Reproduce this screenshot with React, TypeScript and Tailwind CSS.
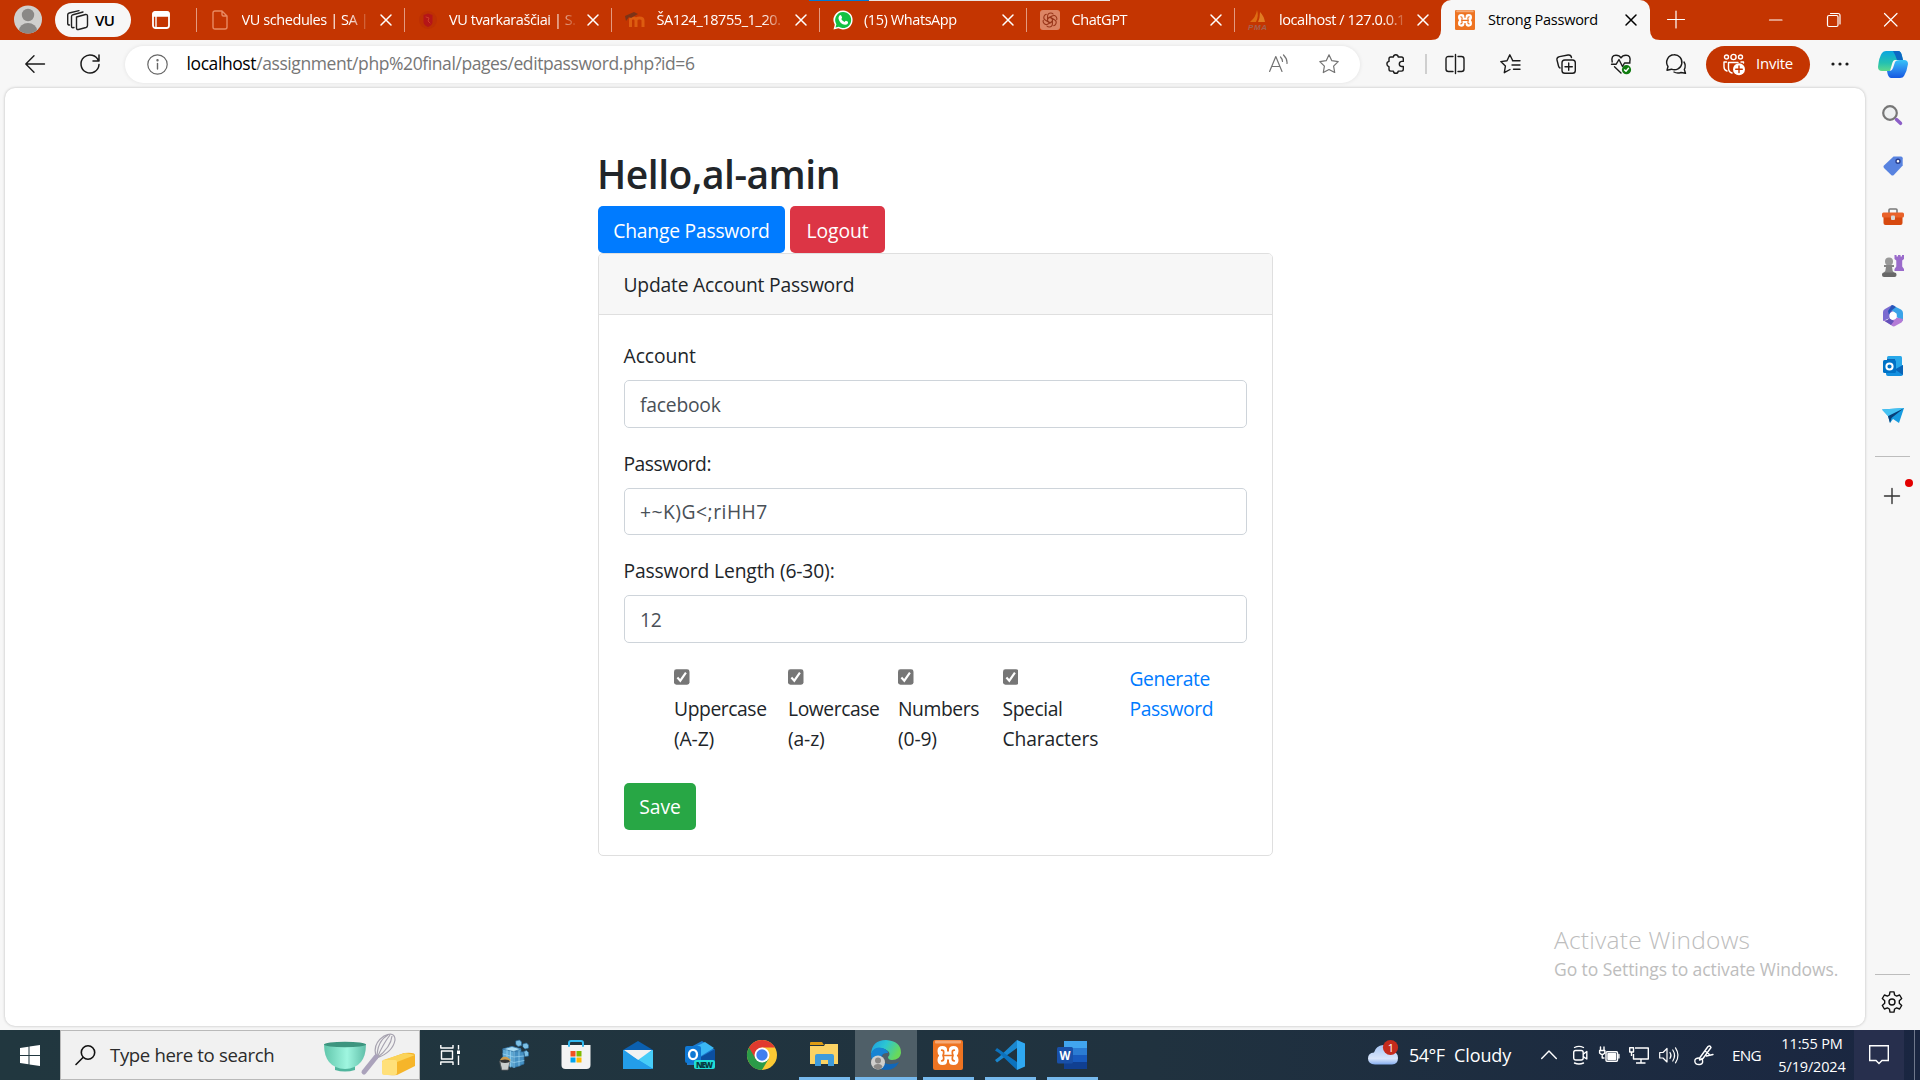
import React from "react";

type IconProps = { w: number; h: number; className?: string; children: React.ReactNode };

function Icon({ w, h, className = "", children }: IconProps) {
  return (
    <svg
      width={w}
      height={h}
      viewBox={`0 0 ${w} ${h}`}
      fill="none"
      stroke="currentColor"
      strokeWidth="1.4"
      strokeLinecap="round"
      strokeLinejoin="round"
      className={`block shrink-0 overflow-visible ${className}`}
    >
      {children}
    </svg>
  );
}

const CloseX = ({ className = "" }: { className?: string }) => (
  <Icon w={12} h={12} className={className}>
    <path d="M1 1 L11 11 M11 1 L1 11" strokeWidth="1.5" />
  </Icon>
);

const XamppIcon = ({ w, h }: { w: number; h: number }) => (
  <svg width={w} height={h} viewBox="0 0 30 30" className="block shrink-0">
    <rect width="30" height="30" rx="2" fill="#ee7422" />
    <rect x="2" y="0.5" width="26" height="3" rx="1" fill="#f6b78b" opacity=".8" />
    <path
      d="M9.500 6 Q14 6 14 9.500 V11.500 H16 V9.500 Q16 6 20.500 6 Q25.500 6 25.500 11 Q25.500 14 23.800 15.500 Q25.500 17 25.500 20 Q25.500 25 20.500 25 Q16 25 16 21.500 V19.500 H14 V21.500 Q14 25 9.500 25 Q4.500 25 4.500 20 Q4.500 17 6.200 15.500 Q4.500 14 4.500 11 Q4.500 6 9.500 6z"
      fill="#fff"
    />
    <path
      d="M8.700 10.200 Q10.700 10.200 10.700 12.200 Q10.700 15.500 9.200 15.500 Q10.700 15.500 10.700 18.800 Q10.700 20.800 8.700 20.800 M21.300 10.200 Q19.300 10.200 19.300 12.200 Q19.300 15.500 20.800 15.500 Q19.300 15.500 19.300 18.800 Q19.300 20.800 21.300 20.800 M10.500 15.500 H19.500"
      fill="none"
      stroke="#ee7422"
      strokeWidth="1.700"
      strokeLinecap="round"
    />
  </svg>
);

const DocIcon = () => (
  <Icon w={16} h={20} className="text-[#e88a62]">
    <path d="M1 3 q0 -2 2 -2 h7 l5 5 v11 q0 2 -2 2 h-10 q-2 0 -2 -2z M10 1 v3.5 q0 1.5 1.5 1.5 h3.5" />
  </Icon>
);
const CrestIcon = () => (
  <Icon w={18} h={20}>
    <circle cx="9" cy="10" r="9" fill="#bd3004" stroke="none" />
    <path d="M4.500 5 l4.500 -1.500 l4.500 1.500 v7 q0 3 -4.500 5 q-4.500 -2 -4.500 -5z" fill="#b51518" stroke="none" />
    <path d="M7 7 l3 1 l-1 3 l2 2" stroke="#cd3c2c" strokeWidth="1" />
  </Icon>
);
const MoodleIcon = () => (
  <Icon w={20} h={16}>
    <path d="M5.500 15 V8 q0 -2 2.500 -2 q3 0 3 2.500 V15 M11 8.500 q0 -2.500 3.500 -2.500 q3.500 0 3.500 2.500 V15" stroke="#dd5c10" strokeWidth="3" strokeLinecap="butt" />
    <path d="M0 4 L9 0 L13 2 L6 6 L4 5 L1 9z" fill="#7c3317" stroke="none" />
  </Icon>
);
const WhatsAppIcon = () => (
  <Icon w={20} h={20}>
    <path d="M10 0.500 A9.500 9.500 0 1 1 5.500 18.300 L0.500 19.500 L1.800 14.800 A9.500 9.500 0 0 1 10 0.500z" fill="#fff" stroke="none" />
    <path d="M10 2 A8 8 0 1 1 5.800 16.700 L2.500 17.500 L3.400 14.300 A8 8 0 0 1 10 2z" fill="#12c143" stroke="none" />
    <path d="M6.500 5.500 q1 -1 1.700 0 l.9 2 q.1.6 -.9 1.500 q1.200 2.200 3.400 3 q1 -1.300 1.400 -1.200 l2 1 q.4 3 -3 2.900 q-5 -.5 -6.500 -6 q-.2 -2 1 -3.200z" fill="#fff" stroke="none" />
  </Icon>
);
const ChatGptIcon = () => (
  <Icon w={20} h={20}>
    <rect width="20" height="20" rx="3" fill="#dc8565" stroke="none" />
    <g stroke="#98361a" strokeWidth="1.100">
      {[0, 60, 120, 180, 240, 300].map((a) => (
        <path key={a} transform={`rotate(${a} 10 10)`} d="M7.600 11.400 V6.300 q0 -3.300 3.200 -3.300 q1.400 0 2.300 1 M7.600 8.600 L10.200 7" />
      ))}
    </g>
  </Icon>
);
const PmaIcon = () => (
  <Icon w={20} h={20}>
    <path d="M9 0 Q11 6 8 12 H2 Q8 7 9 0z" fill="#dd6c13" stroke="none" />
    <path d="M12 2 Q12 8 10 12 H17 Q16 6 12 2z" fill="#e07c23" stroke="none" />
    <text x="0" y="19.500" textLength="19" fontSize="8" fontWeight="700" fontStyle="italic" fontFamily="Liberation Sans" fill="#a5604f" stroke="none">PMA</text>
  </Icon>
);

function Tab({ title, icon }: { title: string; icon: React.ReactNode }) {
  return (
    <div className="flex h-10 w-[207.5px] shrink-0 items-center">
      <div className="h-6 w-px bg-[#e39a80]" />
      <div className="ml-[13px] flex w-5 justify-center">{icon}</div>
      <div className="ml-[11.5px] w-[129px] overflow-hidden whitespace-nowrap text-[14.5px] tracking-[-0.42px] text-white [mask-image:linear-gradient(to_right,black_82%,transparent_100%)]">
        {title}
      </div>
      <CloseX className="ml-[9px] text-white" />
    </div>
  );
}

function TabBar() {
  return (
    <header className="relative flex h-10 shrink-0 items-center bg-[#c43501]">
      <div className="absolute left-[809px] top-0 flex h-px w-[301px]">
        <div className="w-[60px] bg-[#0078d4]" />
        <div className="flex-1 bg-[#e9e4e2]" />
      </div>
      <svg width="28" height="30" viewBox="0 0 28 30" className="ml-[14px] shrink-0">
        <defs>
          <clipPath id="avatar"><ellipse cx="14" cy="14.500" rx="14" ry="14" /></clipPath>
        </defs>
        <ellipse cx="14" cy="14.500" rx="14" ry="14" fill="#d0cfcd" />
        <g clipPath="url(#avatar)" fill="#8a8886">
          <circle cx="14" cy="10" r="6.200" />
          <ellipse cx="14" cy="25.500" rx="9" ry="7.500" />
        </g>
      </svg>
      <div className="ml-[13px] flex h-[34px] w-[76px] items-center rounded-full bg-[#f7f7f7] pl-3">
        <Icon w={21} h={20} className="text-[#222]">
          <path d="M9.500 7 l9 -2.500 q2 -.3 2 1.500 v9.500 q0 1.500 -1.500 2 l-7.500 2 q-2 .4 -2 -1.500z" />
          <path d="M7 17.500 l-1.200 .2 q-1.300 0 -1.300 -1.500 V6.500 q0 -1.300 1.500 -1.800 L16 2" />
          <path d="M2.500 15 q-1.800 0 -1.800 -1.500 V4.800 q0 -1.300 1.500 -1.800 L12 .6" />
        </Icon>
        <span className="ml-[7px] text-[15px] font-semibold tracking-[-0.5px] text-black">VU</span>
      </div>
      <Icon w={18} h={18} className="ml-[21px] text-white">
        <rect x="1" y="1" width="16" height="16" rx="2.500" strokeWidth="1.800" />
        <path d="M1 5 V3 q0 -2 2 -2 h12 q2 0 2 2 v2z" fill="currentColor" />
        <path d="M4 5 v12" />
      </Icon>
      <div className="ml-[26px] flex">
        <Tab title="VU schedules | SA |" icon={<DocIcon />} />
        <Tab title="VU tvarkaraščiai | S." icon={<CrestIcon />} />
        <Tab title="ŠA124_18755_1_20." icon={<MoodleIcon />} />
        <Tab title="(15) WhatsApp" icon={<WhatsAppIcon />} />
        <Tab title="ChatGPT" icon={<ChatGptIcon />} />
        <Tab title="localhost / 127.0.0.1" icon={<PmaIcon />} />
      </div>
      <div className="relative flex h-10 w-[209px] shrink-0 items-center rounded-t-[10px] bg-[#f7f7f7]">
        <svg width="10" height="10" className="absolute -left-[10px] bottom-0"><path d="M10 0 V10 H0 Q10 10 10 0z" fill="#f7f7f7" /></svg>
        <svg width="10" height="10" className="absolute -right-[10px] bottom-0"><path d="M0 0 V10 H10 Q0 10 0 0z" fill="#f7f7f7" /></svg>
        <div className="ml-[14px]"><XamppIcon w={20} h={20} /></div>
        <span className="ml-[13px] w-[137px] whitespace-nowrap text-[14.5px] tracking-[-0.25px] text-black">Strong Password</span>
        <CloseX className="text-black" />
      </div>
      <Icon w={18} h={18} className="ml-[17px] text-white"><path d="M9 0 V17 M0.500 8.500 H17.500" strokeWidth="1.200" /></Icon>
      <Icon w={14} h={14} className="ml-[84px] text-white"><path d="M.5 7 H13" strokeWidth="1.200" /></Icon>
      <Icon w={14} h={14} className="ml-[44px] text-white">
        <rect x=".5" y="2.500" width="10.500" height="11" rx="1.500" strokeWidth="1.200" />
        <path d="M3.500 .5 H11 q2 0 2 2 V11" strokeWidth="1.200" />
      </Icon>
      <Icon w={14} h={14} className="ml-[43px] text-white"><path d="M.5 .5 L13 13 M13 .5 L.5 13" strokeWidth="1.200" /></Icon>
    </header>
  );
}

function Slot({ children }: { children: React.ReactNode }) {
  return <div className="flex w-[55.5px] shrink-0 justify-center">{children}</div>;
}

function Toolbar() {
  return (
    <div className="flex h-12 shrink-0 items-center text-[#1b1b1b]">
      <Icon w={20} h={18} className="ml-[25px]"><path d="M19.500 9 H1 M9 .8 L.8 9 L9 17.200" /></Icon>
      <Icon w={20} h={20} className="ml-[35px]">
        <path d="M18.500 7 A9 9 0 1 0 19 10.500 M19 1 V7 H13" strokeWidth="1.500" />
      </Icon>
      <div className="ml-[25px] flex h-[37px] w-[1235px] shrink-0 items-center rounded-full bg-white shadow-[0_0_4px_rgba(0,0,0,0.09)]">
        <Icon w={21} h={21} className="ml-[22px] text-[#666]">
          <circle cx="10.500" cy="10.500" r="9.700" strokeWidth="1.200" />
          <path d="M10.500 9.500 V15" />
          <circle cx="10.500" cy="6.300" r=".5" fill="currentColor" />
        </Icon>
        <span className="ml-[18.5px] -translate-y-px whitespace-nowrap text-[17.5px] tracking-[-0.41px] text-[#767676]">
          <span className="text-black">localhost</span>/assignment/php%20final/pages/editpassword.php?id=6
        </span>
        <div className="ml-auto mr-[21px] flex items-center text-[#737373]">
          <Icon w={20} h={19} className="-translate-y-px">
            <path d="M.6 17.500 L6.800 2.500 L13 17.500 M2.800 12.500 H10.800 M11.500 3 q2 2 2 4.500 M14.500 1 q4 4 3.500 8.500" strokeWidth="1.200" />
          </Icon>
          <Icon w={20} h={20} className="ml-[30px]">
            <path d="M10 .8 L12.800 6.700 L19.200 7.600 L14.600 12.100 L15.700 18.500 L10 15.500 L4.300 18.500 L5.400 12.100 L.8 7.600 L7.200 6.700z" strokeWidth="1.200" />
          </Icon>
        </div>
      </div>
      <div className="ml-4 flex w-10 shrink-0 justify-center">
        <Icon w={20} h={20}>
          <path d="M4.800 3 H7.400 Q7.600 .8 9.800 .8 Q12 .8 12.200 3 H15.500 q1.800 0 1.800 1.800 V7.400 H15.500 Q13.300 7.800 13.300 10 Q13.300 12.200 15.500 12.500 H17.300 V15.300 q0 1.800 -1.800 1.800 H12.200 Q12 19.300 9.800 19.300 Q7.600 19.300 7.400 17.100 H4.800 q-1.800 0 -1.800 -1.800 V12.800 Q.9 12.300 .9 10.100 Q.9 7.800 3 7.400 V4.800 q0 -1.800 1.800 -1.800z" />
        </Icon>
      </div>
      <div className="ml-[9px] h-5 w-[2px] bg-[#cfcfcf]" />
      <Slot>
        <Icon w={20} h={20}>
          <path d="M8 2.500 H3.500 q-2.500 0 -2.500 2.500 V15 q0 2.500 2.500 2.500 H8 M10.500 .5 V19.500 M13 2.500 H16.500 q2.500 0 2.500 2.500 V15 q0 2.500 -2.500 2.500 H13" />
        </Icon>
      </Slot>
      <Slot>
        <Icon w={21} h={20}>
          <path d="M12.800 6.800 L9.800 .8 L7 6.800 L.8 7.600 L5.400 12.100 L4.300 18.700 L10 15.500 M12.500 6.800 H20 M12 11 H20 M13.500 15.300 H20" />
        </Icon>
      </Slot>
      <Slot>
        <Icon w={20} h={20}>
          <rect x="6" y="6" width="13.300" height="13.300" rx="2.800" />
          <path d="M12.700 9 V16.300 M9 12.700 H16.300 M15.500 3.500 q-.6 -3 -3.500 -2.500 L3.500 2.600 Q.4 3.300 1 6 L2.500 12 q.4 1.600 1.500 2" />
        </Icon>
      </Slot>
      <Slot>
        <Icon w={20} h={20}>
          <path d="M1.200 8 Q-.2 1.300 5 1.200 Q8.500 1.200 10 4 Q11.500 1.200 15 1.200 Q20.200 1.300 18.800 8 M3.500 12.800 L10 19 M.5 10.200 H5.200 L8 5.500 L11.500 12.500 L13.500 9 H19" />
          <circle cx="15.500" cy="15.700" r="4.600" fill="#107c10" stroke="none" />
          <path d="M13.500 15.900 L15 17.200 L17.500 14.300" stroke="#fff" />
        </Icon>
      </Slot>
      <Slot>
        <Icon w={20} h={20} className="-translate-x-px">
          <path d="M8 .8 A7.500 7.500 0 1 1 5.500 15.200 L1 16.200 L2 12.500 A7.500 7.500 0 0 1 8 .8z" />
          <path d="M8 18 Q11 19.800 15 18.500 L19.500 19.300 L18.300 15.500 Q20.300 11.500 18 8" />
        </Icon>
      </Slot>
      <div className="ml-[1.5px] flex h-[37px] w-[104px] shrink-0 items-center rounded-full bg-[#c43501] pl-[17px] text-white">
        <Icon w={22} h={21}>
          <circle cx="3.500" cy="3" r="2" />
          <circle cx="10.500" cy="3" r="2.600" />
          <circle cx="17.500" cy="3" r="2" />
          <path d="M3.500 8 H1 V13 q0 3 3 4 M5.500 8.500 V14 q0 4 3.500 5 M5.500 8.500 H15 M18 8 H20.500 V9" />
          <circle cx="16" cy="15.300" r="6" fill="#fff" stroke="none" />
          <path d="M16 12 V18.600 M12.700 15.300 H19.300" stroke="#c43501" />
        </Icon>
        <span className="ml-[11px] -translate-y-px text-[15px] tracking-[-0.25px]">Invite</span>
      </div>
      <div className="flex w-[60px] shrink-0 justify-center">
        <Icon w={18} h={4}>
          <g fill="currentColor" stroke="none"><circle cx="2" cy="2" r="1.600" /><circle cx="9" cy="2" r="1.600" /><circle cx="16" cy="2" r="1.600" /></g>
        </Icon>
      </div>
      <div className="flex w-[46px] shrink-0 justify-center">
        <svg width="30" height="27" viewBox="0 0 30 27" className="block shrink-0">
          <defs>
            <linearGradient id="cpA" x1="0" y1="0" x2="0" y2="1"><stop offset="0" stopColor="#0aa5e0" /><stop offset=".6" stopColor="#25c1b0" /><stop offset="1" stopColor="#5fd98c" /></linearGradient>
            <linearGradient id="cpB" x1="0" y1="0" x2="0" y2="1"><stop offset="0" stopColor="#36c4f7" /><stop offset=".5" stopColor="#2b8bf0" /><stop offset="1" stopColor="#1558e0" /></linearGradient>
          </defs>
          <path d="M8 0 H20 Q23 0 24 5 L25 9 H17 Q15 9 14 13 L12 20 H4 Q0 20 0 16 Q1 6 4 2 Q5.500 0 8 0z" fill="url(#cpA)" />
          <path d="M15 0 H20 Q23 0 24 5 L25 9 H19 Q17 3 15 0z" fill="#0d68c4" />
          <path d="M22 9 H26 Q30 9 30 13 Q29 20 26 25 Q25 27 22 27 H13 Q10 27 9 20 H12 Q14 20 15 17 L17 11 Q18 9 22 9z" fill="url(#cpB)" />
        </svg>
      </div>
    </div>
  );
}

function Field({ label, value, labelClass = "", valueClass = "" }: { label: string; value: string; labelClass?: string; valueClass?: string }) {
  return (
    <div className="mb-5">
      <label className="mb-[10px] block leading-[30px]"><span className={`relative -left-[0.5px] top-px ${labelClass}`}>{label}</span></label>
      <div className="flex h-[47.5px] items-center rounded-[5px] border border-[#ced4da] bg-white px-[15px] text-[#495057]">
        <span className={`relative top-px ${valueClass}`}>{value}</span>
      </div>
    </div>
  );
}

function Option({ first, second, className }: { first: string; second: string; className: string }) {
  return (
    <div className={`shrink-0 whitespace-nowrap ${className}`}>
      <div className="flex h-[31px] items-start pt-[6px]">
        <svg width="15.500" height="16" viewBox="0 0 16 16">
          <rect width="16" height="16" rx="2.500" fill="#767676" />
          <path d="M3.500 8.500 L6.500 11.800 L12.300 3.600" fill="none" stroke="#fff" strokeWidth="2.200" />
        </svg>
      </div>
      <div>{first}</div>
      <div className="tracking-[-0.15px]">{second}</div>
    </div>
  );
}

function PasswordPage() {
  return (
    <main className="relative ml-[5px] h-[938px] w-[1860px] shrink-0 rounded-[10px] bg-white shadow-[0_0_3px_rgba(0,0,0,0.25)]">
      <div className="ml-[593px] w-[675px] pt-[62px] text-[19.3px] leading-[30px] tracking-[-0.22px] text-[#212529]">
        <h1 className="mb-[8px] whitespace-nowrap text-[39px] font-semibold leading-[48px] tracking-[-0.5px]">
          <span className="relative -left-px">Hello,al-amin</span>
        </h1>
        <div className="flex h-[47px] gap-[5px] text-white">
          <button className="w-[187px] rounded-[5px] bg-[#007bff] pt-[2px]">Change Password</button>
          <button className="w-[95px] rounded-[5px] bg-[#dc3545] pt-[2px] tracking-[-0.05px]">Logout</button>
        </div>
        <section className="h-[603px] overflow-hidden rounded-[5px] border border-[#dfdfdf]">
          <div className="flex h-[61px] items-center border-b border-[#dfdfdf] bg-[#f7f7f7] px-[24.500px] pt-px">Update Account Password</div>
          <div className="px-[25px] pt-[25px]">
            <Field label="Account" value="facebook" labelClass="tracking-[-0.05px]" />
            <Field label="Password:" value="+~K)G<;riHH7" labelClass="tracking-[-0.5px]" valueClass="tracking-[0.5px]" />
            <Field label="Password Length (6-30):" value="12" labelClass="tracking-[-0.15px]" />
            <div className="ml-[50px] flex h-[90px] tracking-[-0.42px]">
              <Option first="Uppercase" second="(A-Z)" className="w-[114px]" />
              <Option first="Lowercase" second="(a-z)" className="w-[110px]" />
              <Option first="Numbers" second="(0-9)" className="w-[104.500px]" />
              <Option first="Special" second="Characters" className="w-[127px]" />
              <a className="pt-px text-[#007bff]">Generate<br />Password</a>
            </div>
            <button className="mt-[30px] h-[47.500px] w-[72px] rounded-[5px] bg-[#28a745] pt-px tracking-normal text-white">Save</button>
          </div>
        </section>
      </div>
      <div className="absolute left-[1549px] top-[836px] whitespace-nowrap text-[#bdbdbd]">
        <div className="text-[24.500px] font-light leading-[32px] tracking-[0.25px]">Activate Windows</div>
        <div className="text-[17.500px] leading-[26px] tracking-[-0.07px]">Go to Settings to activate Windows.</div>
      </div>
    </main>
  );
}

function Sidebar() {
  return (
    <aside className="flex h-[942px] flex-1 flex-col items-center pr-px">
      <div className="flex h-[50px] translate-y-[2px] items-center">
        <Icon w={20} h={20}>
          <circle cx="8" cy="8" r="6.800" stroke="#767676" strokeWidth="2.200" fill="#eef0f1" />
          <path d="M14.500 14.500 L18.500 18.300" stroke="#8c5fc7" strokeWidth="3.500" />
        </Icon>
      </div>
      <div className="flex h-[50px] translate-x-px translate-y-[3px] items-center">
        <Icon w={20} h={20}>
          <path d="M10.500 .5 H18 q1.700 0 1.700 1.700 V9.500 L10.800 19 q-1.300 1.200 -2.600 0 L1 12 q-1.200 -1.300 0 -2.600z" fill="#5883e0" stroke="none" />
          <circle cx="15" cy="5.200" r="2" stroke="#2a3f8d" fill="#fff" />
        </Icon>
      </div>
      <div className="flex h-[50px] translate-x-px translate-y-[4px] items-center">
        <Icon w={22} h={18}>
          <path d="M7 5 V2 q0 -1 1 -1 h6 q1 0 1 1 V5" stroke="#7a7a7a" strokeWidth="1.600" />
          <path d="M1.500 7 H20.500 V15 q0 2 -2 2 H3.500 q-2 0 -2 -2z" fill="#d7490f" stroke="none" />
          <rect x="0" y="4.500" width="22" height="5" rx="1.500" fill="#e9622a" stroke="none" />
          <rect x="9" y="7.500" width="4" height="4.500" rx="1" fill="#d8d8d8" stroke="none" />
        </Icon>
      </div>
      <div className="flex h-[50px] translate-x-px translate-y-[3px] items-center">
        <Icon w={22} h={22}>
          <path d="M12.500 0 h2 v1.500 h1.500 V0 h2.500 v1.500 H20 V0 h2 v4 l-1.800 1.500 v6 l1.800 2.500 v2 h-9.500 v-2 l1.800 -2.500 v-6 L12.500 4z" fill="#9a6bcb" stroke="none" />
          <circle cx="7" cy="6.500" r="4" fill="#999" stroke="none" />
          <path d="M2 10 h10 v2 h-2 q0 4 2.500 6 h-11 q2.500 -2 2.500 -6 h-2z" fill="#858585" stroke="none" />
          <rect x="0" y="17.500" width="14.500" height="4.500" rx="2" fill="#686868" stroke="none" />
        </Icon>
      </div>
      <div className="flex h-[50px] translate-x-px translate-y-[3px] items-center">
        <Icon w={20} h={22}>
          <path d="M9 0 L2 4 Q0 5 0 7 V16 L7 13 V8 L12 5 V1z" fill="#7a6bd0" stroke="none" />
          <path d="M9 0 L18 4.500 Q20 5.500 20 8 V16 L13.500 12 V8.500 L8 5z" fill="#3aa3e8" stroke="none" />
          <path d="M0 15 L8 20 Q10 22.500 13 20.500 L18.500 17.500 Q20 16.500 20 14 L13.500 12.500 L8 16z" fill="#b47bd6" stroke="none" />
          <path d="M9 0 L13 2 L8 6 L6 10 L5 6z" fill="#2755b8" stroke="none" />
          <path d="M0 15 Q3 17 6.500 13 L11 16 L8 20z" fill="#6452ba" stroke="none" />
          <circle cx="10" cy="11" r="3.700" fill="#fff" stroke="none" />
        </Icon>
      </div>
      <div className="flex h-[50px] translate-x-px translate-y-[3px] items-center">
        <Icon w={20} h={20}>
          <rect x="4" y="0" width="15" height="13" rx="1.500" fill="#28a8ea" stroke="none" />
          <path d="M4 3 h8 v9 h-8z" fill="#0f65b4" stroke="none" />
          <path d="M3 9 L11 14 L20 9 V18 q0 2 -2 2 H5 q-2 0 -2 -2z" fill="#1490df" stroke="none" />
          <path d="M20 9 V19 L12 13.500z" fill="#0a64b7" stroke="none" />
          <rect x="0" y="4" width="13" height="13" rx="1.500" fill="#0072c6" stroke="none" />
          <circle cx="6.500" cy="10.500" r="3.100" stroke="#fff" strokeWidth="2" />
        </Icon>
      </div>
      <div className="flex h-[50px] translate-x-px translate-y-[3px] items-center">
        <Icon w={22} h={16}>
          <path d="M0 1.500 L22 0 L17 15 L11 11 L8 15 L6 8z" fill="#169be0" stroke="none" />
          <path d="M6 8 L22 0 L9.500 10 L8 15z" fill="#083f78" stroke="none" />
          <path d="M0 1.500 L22 0 L6 8z" fill="#45c2f2" stroke="none" />
        </Icon>
      </div>
      <div className="mt-[18px] h-px w-[35px] bg-[#bdbdbd]" />
      <div className="relative mt-[31px]">
        <Icon w={16} h={16} className="text-[#333]"><path d="M8 .5 V15.500 M.5 8 H15.500" /></Icon>
        <span className="absolute -right-[13px] -top-[9px] h-2 w-2 rounded-full bg-[#e30000]" />
      </div>
      <div className="mt-auto h-px w-[35px] bg-[#bdbdbd]" />
      <Icon w={22} h={22} className="mb-[17px] mt-[16px] text-[#111]">
        <path
          d="M9 .9 H13 L13.600 4 L15.600 5.100 L18.600 4 L20.700 7.500 L18.300 9.700 V12.300 L20.700 14.500 L18.600 18 L15.600 16.900 L13.600 18 L13 21.100 H9 L8.400 18 L6.400 16.900 L3.400 18 L1.300 14.500 L3.700 12.300 V9.700 L1.300 7.500 L3.400 4 L6.400 5.100 L8.400 4z"
        />
        <circle cx="11" cy="11" r="3" />
      </Icon>
    </aside>
  );
}

function AppCell({ children, state = "idle" }: { children: React.ReactNode; state?: "idle" | "open" | "active" }) {
  return (
    <div className={`relative flex h-[50px] w-[62px] shrink-0 items-center justify-center ${state === "active" ? "bg-[#4f5f68]" : ""}`}>
      {children}
      {state === "open" && <div className="absolute bottom-0 h-[3px] w-[51px] bg-[#76b9ed]" />}
      {state === "active" && <div className="absolute bottom-0 h-[3px] w-[62px] bg-[#76b9ed]" />}
    </div>
  );
}

function Taskbar() {
  return (
    <footer className="flex h-[50px] shrink-0 items-center bg-linear-to-r from-[#21373f] via-[#20323f] via-60% to-[#1a2641] text-white">
      <div className="flex w-[60px] justify-center">
        <Icon w={20} h={21}>
          <path d="M0 3 L8.500 1.800 V10 H0z M9.500 1.600 L20 0 V10 H9.500z M0 11 H8.500 V19.200 L0 18z M9.500 11 H20 V21 L9.500 19.400z" fill="#fff" stroke="none" />
        </Icon>
      </div>
      <div className="flex h-[50px] w-[360px] shrink-0 items-center border border-[#b9b9b9] bg-[#f1f1f1] text-[#2b2b2b]">
        <Icon w={21} h={20} className="ml-[14px] text-[#111]">
          <circle cx="13" cy="7.500" r="6.700" strokeWidth="1.600" />
          <path d="M8 12.500 L1 19.500" strokeWidth="1.600" />
        </Icon>
        <span className="ml-[14px] whitespace-nowrap text-[18.600px] tracking-[-0.360px]">Type here to search</span>
        <svg width="94" height="44" viewBox="0 0 94 44" className="ml-auto mr-[2px] block shrink-0">
          <defs>
            <linearGradient id="bowl" x1="0" y1="0" x2="1" y2="0"><stop offset="0" stopColor="#61c6ab" /><stop offset=".55" stopColor="#9ff6e0" /><stop offset="1" stopColor="#60bea8" /></linearGradient>
          </defs>
          <path d="M12 32 h20 v5 q-10 3 -20 0z" fill="#50b59d" />
          <path d="M1 11 Q1 35 22 36 Q43 35 43 11z" fill="url(#bowl)" />
          <ellipse cx="22" cy="11.500" rx="21" ry="2.800" fill="#3d957f" />
          <g fill="none" stroke="#a7a3b0" strokeWidth="1.200">
            <path d="M54 25 Q48 12 61 3 Q72 -2 72 7 Q70 19 54 25z M54 25 Q54 8 65 2 M54 25 Q68 14 69 3 M54 25 Q60 11 67 2" />
          </g>
          <path d="M53 24 L41 39" stroke="#aaa2bb" strokeWidth="5" strokeLinecap="round" />
          <path d="M59 28 L81 20 Q92 19 92 22 V33 L74 42 Q60 43 59 39z" fill="#f6b52a" />
          <path d="M60 27 L82 20 L92 22 L74 29z" fill="#fbd45a" />
          <rect x="59" y="27" width="15" height="15" rx="2" fill="#ffe07a" />
        </svg>
      </div>
      <div className="flex w-[63px] shrink-0 items-center pl-[20px]">
        <Icon w={20} h={20}>
          <path d="M.8 0 V3 H13 V0 M1.500 6 H12.500 V14 H1.500z M.8 20 V17 H13 V20 M18.500 0 V4.500 M18.500 10.500 V20" strokeLinecap="butt" />
          <rect x="17" y="5.500" width="3" height="3.500" fill="#fff" stroke="none" />
        </Icon>
      </div>
      <AppCell>
        <Icon w={30} h={30}>
          <g stroke="#2e6f9e" strokeWidth=".7">
            <path d="M4 9 L13 6.500 L22 9 V25 L15 27.500 L4 25z" fill="#5ea8d3" />
            <path d="M4 9 L13 6.500 L22 9 L15 11.500z" fill="#a9dcf4" />
            <path d="M15 11.500 L25 12 V24 L15 27.500z" fill="#4590c2" />
            <path d="M4 14 L15 17 L25 16 M4 19.500 L15 22.500 L25 20.500 M8 10 V26 M11.500 11 V27 M15 11.500 V27.500 M20 11.500 V26" stroke="#9cd6f2" />
            <path d="M17 1 l3.500 -1 l2 2 v3.500 l-3.500 1 l-2 -2z M24 4 l3.500 -1 l2 2 v3 l-3.500 1 l-2 -2z M25 11.500 l2.500 -1 l2 2 v3.500 l-3.500 .5z" fill="#7cc0e4" />
          </g>
          <path d="M1 21 L11 21.500 L9 30 H3z" fill="#c9cdcc" stroke="#666" strokeWidth=".7" />
          <path d="M1 20 Q3 15.500 8 17 L12 20 L9 22z" fill="#c99a4e" stroke="none" />
          <ellipse cx="6" cy="21.300" rx="4.500" ry="1.700" fill="#333" stroke="none" />
        </Icon>
      </AppCell>
      <AppCell>
        <Icon w={30} h={30}>
          <path d="M8 6 V3 q0 -2 2 -2 h10 q2 0 2 2 V6" stroke="#31b8f0" strokeWidth="2" />
          <path d="M.5 5 H29.500 V25 q0 4 -4 4 H4.500 q-4 0 -4 -4z" fill="#f3f3f3" stroke="none" />
          <path d="M8 5 V6 M22 5 V6" stroke="#31b8f0" strokeWidth="2" />
          <g stroke="none"><path d="M9.500 11h5v5.500h-5z" fill="#f25022" /><path d="M15.500 11h5v5.500h-5z" fill="#7fba00" /><path d="M9.500 17.500h5v5h-5z" fill="#00a4ef" /><path d="M15.500 17.500h5v5h-5z" fill="#ffb900" /></g>
        </Icon>
      </AppCell>
      <AppCell>
        <Icon w={30} h={28}>
          <path d="M0 9 L15 0 L30 9z" fill="#0b60b0" stroke="none" />
          <path d="M0 9 H30 V27 H0z" fill="#1d9be8" stroke="none" />
          <path d="M30 9 V28 L14 18z" fill="#47cdf8" stroke="none" />
          <path d="M1 9 H29 L15 19z" fill="#f2f2f2" stroke="none" />
          <path d="M0 10 L30 28 H0z" fill="#239de9" stroke="none" />
        </Icon>
      </AppCell>
      <AppCell>
        <Icon w={30} h={30}>
          <path d="M2 9 L17 1 L30 10 V25 H2z" fill="#1c7bd0" stroke="none" />
          <path d="M8 8 L20 2 L29 8 L16 16z" fill="#3ab8f5" stroke="none" />
          <path d="M14 18 L30 9 V24 H14z" fill="#0b4fa0" stroke="none" />
          <rect x="0" y="6" width="16" height="17" rx="2" fill="#0f78d4" stroke="none" />
          <ellipse cx="8" cy="14.500" rx="4" ry="4.700" stroke="#fff" strokeWidth="2.300" />
          <rect x="9" y="20" width="21" height="9" rx="2" fill="#20ded6" stroke="none" />
          <text x="11" y="27.500" textLength="17" fontSize="8" fontWeight="800" fontFamily="Open Sans" fill="#06383d" stroke="none">NEW</text>
        </Icon>
      </AppCell>
      <AppCell>
        <Icon w={30} h={30}>
          <g stroke="none">
            <circle cx="15" cy="15" r="15" fill="#fcc934" />
            <path d="M15 15 L2 7.500 A15 15 0 0 0 15 30 L21.500 19z" fill="#2b9b48" />
            <path d="M2 7.500 A15 15 0 0 1 28 7.500 H15 L8.500 18.800z" fill="#e13a2e" />
            <circle cx="15" cy="15" r="7.500" fill="#fff" />
            <circle cx="15" cy="15" r="5.700" fill="#3f7ff0" />
          </g>
        </Icon>
      </AppCell>
      <AppCell state="open">
        <Icon w={28} h={24} className="-translate-y-px">
          <path d="M0 1 q0 -1 1 -1 H12 l2 3 H0z" fill="#dd9b12" stroke="none" />
          <path d="M0 4 H14 l1 -2 H28 V22 H0z" fill="#fcd364" stroke="none" />
          <path d="M5 24 V14 q0 -2 2 -2 H22 q2 0 2 2 V24 H18 V18 H11 V24z" fill="#3f9bdb" stroke="none" />
        </Icon>
      </AppCell>
      <AppCell state="active">
        <Icon w={30} h={30}>
          <defs>
            <linearGradient id="edge" x1="0" y1="0" x2="1" y2=".4"><stop offset="0" stopColor="#1c9be3" /><stop offset=".5" stopColor="#2cc6d2" /><stop offset="1" stopColor="#69d95a" /></linearGradient>
          </defs>
          <g stroke="none">
            <path d="M0 14 Q1 0 15 0 Q30 1 30 13 Q29 20 21 20 Q17 20 17 17 Q20 14 17 11 Q12 7 5 9z" fill="url(#edge)" />
            <path d="M0 14 Q3 7 10 8 Q16 9 17 13 Q11 12 11 18 Q12 25 20 24 Q25 24 28 22 Q24 30 15 30 Q1 29 0 14z" fill="#1167b8" />
            <path d="M0 14 Q3 6 11 8 Q17 10 17 13 Q10 12 9 20 L9 28 Q0 23 0 14z" fill="#1784d3" />
            <circle cx="7" cy="22.500" r="7" fill="#d0cfcd" />
            <circle cx="7" cy="20.500" r="3" fill="#8a8886" />
            <path d="M2.500 27 Q3 24 7 24 Q11 24 11.500 27 Q9 29.500 7 29.500 Q5 29.500 2.500 27z" fill="#8a8886" />
          </g>
        </Icon>
      </AppCell>
      <AppCell state="open"><XamppIcon w={30} h={30} /></AppCell>
      <AppCell state="open">
        <Icon w={30} h={30}>
          <g stroke="none">
            <path d="M22 0 L4 17 L0 20 L2 22.500 L22 8z" fill="#1a87cf" />
            <path d="M22 30 L4 13 L0 10.500 L2 8 L22 22z" fill="#0c72bd" />
            <path d="M22 0 L30 3.500 V26.500 L22 30 V22.500 L22 7.500z" fill="#2fa8f2" />
          </g>
        </Icon>
      </AppCell>
      <AppCell state="open">
        <Icon w={30} h={28}>
          <g stroke="none">
            <rect x="7" y="0" width="23" height="7" fill="#41a5ee" />
            <rect x="7" y="7" width="23" height="7" fill="#2b7cd3" />
            <rect x="7" y="14" width="23" height="7" fill="#185abd" />
            <rect x="7" y="21" width="23" height="7" fill="#103f91" />
            <rect x="0" y="6" width="16" height="16.500" rx="1.500" fill="#1950a8" />
            <text x="2.500" y="18.500" textLength="11" lengthAdjust="spacingAndGlyphs" fontSize="12" fontWeight="700" fontFamily="Open Sans" fill="#fff">W</text>
          </g>
        </Icon>
      </AppCell>
      <div className="ml-auto flex h-[50px] shrink-0 items-center">
        <Icon w={31} h={30} className="-translate-y-px">
          <defs>
            <linearGradient id="cloud" x1="0" y1="0" x2="0" y2="1"><stop offset="0" stopColor="#a6c5f3" /><stop offset=".7" stopColor="#d9e6fb" /><stop offset="1" stopColor="#86aef0" /></linearGradient>
          </defs>
          <path d="M7 25.500 Q0 25 0 19.500 Q0 14 6 13.500 Q8 6.500 15 6 Q22 6 24 12.500 Q30 13 30 19 Q30 25 24 25.500z" fill="url(#cloud)" stroke="none" />
          <circle cx="22.500" cy="8.500" r="7.600" fill="#c52b1c" stroke="none" />
          <text x="19.800" y="12.500" fontSize="11" fontFamily="Open Sans" fill="#fff" stroke="none">1</text>
        </Icon>
        <span className="ml-[10px] w-[45px] whitespace-nowrap text-[18px] tracking-[-0.500px]">54°F</span>
        <span className="w-[87px] whitespace-nowrap text-[18px] tracking-[-0.1px]">Cloudy</span>
        <Icon w={16} h={9} className="-translate-y-px"><path d="M.7 8.500 L8 1 L15.300 8.500" /></Icon>
        <Icon w={15} h={18} className="ml-[16px]">
          <rect x=".7" y="4.500" width="9.500" height="9.500" rx="2" />
          <path d="M10.500 8 L13.800 5.500 V13 L10.500 10.800 M1.500 1.500 Q6 -.8 10.500 1.500 M1.500 17 Q6 19 10.500 17" />
        </Icon>
        <Icon w={20} h={16} className="ml-[11px]">
          <rect x="7" y="4.700" width="11.500" height="9.500" rx="1" />
          <rect x="9" y="6.700" width="7.500" height="5.500" fill="#fff" />
          <path d="M19.900 7.500 V11 M1.500 0 V3 M5 0 V3 M.6 3.500 H5.800 V6 q-2.500 3 -5.200 0z M3.200 8 V11 H5" />
        </Icon>
        <Icon w={20} h={17} className="ml-[10px]">
          <path d="M6 1 H19.300 V12 H4.500 V7 M12 12 V16 M7 16 H16.500 M.7 .7 H4.500 V5 H.7z M2.500 5 V9" strokeLinecap="butt" />
        </Icon>
        <Icon w={20} h={17} className="ml-[10px]">
          <path d="M.7 5.500 H4 L8 1.500 V15 L4 11 H.7z M11 5.500 q2 3 0 6 M13.800 3 q3.500 5.500 0 11 M16.500 .8 q5 7.500 0 15" strokeWidth="1.200" />
        </Icon>
        <Icon w={20} h={20} className="ml-[15px]">
          <path d="M6 12.500 L14 1.500 q2 -1.500 3 1 L9 13.500 L5.500 15z M8 13.500 Q10 19 6 19.500 Q1 20 .8 16 Q1 13 5 13 M12.500 11 L19 9.500 M11 6 L15 9" />
        </Icon>
        <span className="ml-[18px] w-[34px] text-[15.300px] tracking-[-0.700px]">ENG</span>
        <div className="ml-[8px] w-[76px] whitespace-nowrap text-center text-[14.500px] leading-[23px] tracking-[-0.15px]">
          <div>11:55 PM</div>
          <div>5/19/2024</div>
        </div>
        <div className="ml-[4px] flex h-[50px] w-[50px] items-center justify-center bg-[#272f4d]">
          <Icon w={20} h={20}>
            <path d="M.7 .7 H19.300 V15.500 H13 L10 18.500 L7 15.500 H.7z" strokeLinejoin="miter" />
          </Icon>
        </div>
        <div className="ml-[10px] mr-[5px] h-[50px] w-px bg-[#6f788c]" />
      </div>
    </footer>
  );
}

export default function App() {
  return (
    <div className="flex h-[1080px] w-[1920px] flex-col overflow-hidden bg-[#f7f7f7] font-['Open_Sans','Noto_Sans',sans-serif]">
      <TabBar />
      <Toolbar />
      <div className="flex h-[942px] shrink-0">
        <PasswordPage />
        <Sidebar />
      </div>
      <Taskbar />
    </div>
  );
}
